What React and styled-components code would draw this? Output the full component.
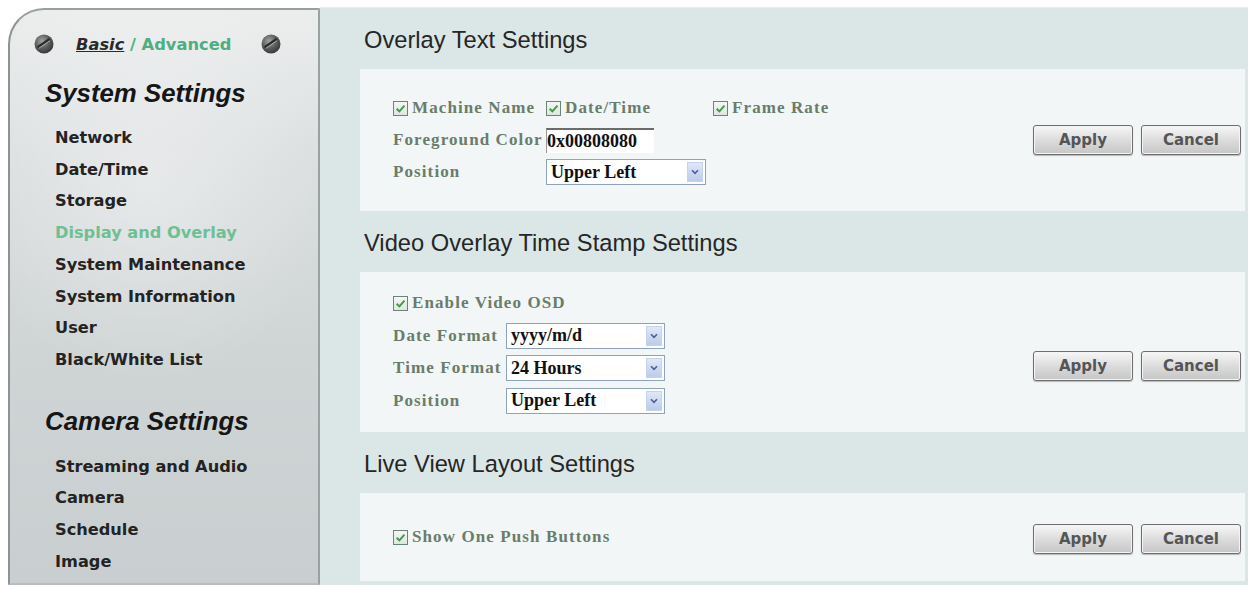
import React from 'react'
import styled, { createGlobalStyle } from 'styled-components'

const GlobalStyle = createGlobalStyle`
  html, body {
    margin: 0;
    padding: 0;
    background: #ffffff;
  }
  body {
    font-family: "Liberation Sans", Arial, sans-serif;
  }
`

const StyledPage = styled.div`
  display: flex;
  width: 1253px;
  height: 590px;
  box-sizing: border-box;
  padding: 7px 5px 5px 8px;
`

const StyledSidebar = styled.div`
  width: 312px;
  flex-shrink: 0;
  box-sizing: border-box;
  margin-top: 1px;
  border-top-left-radius: 36px;
  border-left: 2px solid #8e9293;
  border-top: 2px solid #9a9e9f;
  border-right: 2px solid #9aa1a2;
  border-bottom: 2px solid #b8bdbe;
  background:
    radial-gradient(ellipse 60% 35% at 45% 30%, rgba(255, 255, 255, 0.35), rgba(255, 255, 255, 0)),
    linear-gradient(180deg, #eceeee 0%, #dcdfe0 25%, #cfd4d5 60%, #c9cfd0 100%);
  font-family: "DejaVu Sans", Verdana, sans-serif;
`

const StyledModeRow = styled.div`
  display: flex;
  align-items: center;
  height: 24px;
  margin: 22px 0 0 23px;
  width: 249px;
  font-size: 16.3px;
  font-weight: bold;
  color: #4fae80;
`

const StyledModeText = styled.div`
  flex: 1;
  padding-left: 21px;
`

const StyledBasic = styled.span`
  color: #2a2a2a;
  font-style: italic;
  text-decoration: underline;
`

const StyledGroupTitle = styled.div`
  font-family: "Liberation Sans", Arial, sans-serif;
  font-style: italic;
  font-weight: bold;
  font-size: 25.8px;
  line-height: 34px;
  color: #161616;
  margin: ${props => props.top}px 0 0 35px;
`

const StyledNav = styled.div`
  margin: ${props => props.top}px 0 0 45px;
`

const StyledNavItem = styled.div`
  font-size: 16.2px;
  font-weight: bold;
  line-height: 31.7px;
  color: ${props => props.active ? '#6fbf94' : '#232323'};
`

const StyledMain = styled.div`
  flex: 1;
  display: flex;
  flex-direction: column;
  background: #dbe6e6;
  padding: 0 3px 3px 40px;
  border-top: 1px solid #e8eeee;
`

const StyledHeader = styled.div`
  height: 61px;
  display: flex;
  align-items: center;
  padding: 3px 0 0 4px;
  box-sizing: border-box;
  font-size: 23.7px;
  color: #262626;
`

const StyledPanel = styled.div`
  display: flex;
  align-items: center;
  height: ${props => props.h}px;
  background: #f2f6f6;
  padding: 0 4px 0 33px;
  box-sizing: border-box;
`

const StyledForm = styled.div`
  flex: 1;
  display: grid;
  grid-template-columns: ${props => props.cols};
  grid-auto-rows: ${props => props.pitch}px;
  align-items: center;
  font-family: "Liberation Serif", "Times New Roman", serif;
  font-weight: bold;
  font-size: 17px;
  letter-spacing: 1.1px;
  color: #6a7c6a;
`

const StyledCheckLabel = styled.label`
  display: flex;
  align-items: center;
  gap: 4px;
  white-space: nowrap;
  grid-column: ${props => props.span ? '1 / -1' : 'auto'};
`

const StyledBox = styled.span`
  width: 13px;
  height: 13px;
  border: 1px solid #6a8577;
  background: linear-gradient(180deg, #f4f6f4, #dfe6df);
  display: inline-flex;
  align-items: center;
  justify-content: center;
  flex-shrink: 0;
`

const StyledLabel = styled.span`
  white-space: nowrap;
`

const StyledTextInput = styled.div`
  width: 108px;
  height: 25px;
  box-sizing: border-box;
  background: #fff;
  border-top: 2px solid #6b6b6b;
  border-left: 1px solid #9a9a9a;
  display: flex;
  align-items: center;
  color: #111;
  letter-spacing: 0;
  font-size: 18px;
`

const StyledSelect = styled.div`
  width: ${props => props.w}px;
  height: 26px;
  box-sizing: border-box;
  background: #fff;
  border: 1px solid #8ea3c0;
  display: flex;
  align-items: center;
  justify-content: space-between;
  padding-left: 4px;
  color: #111;
  letter-spacing: 0;
  font-size: 18px;
`

const StyledArrow = styled.span`
  width: 16px;
  height: 20px;
  margin-right: 2px;
  background: linear-gradient(180deg, #dfe8f7, #bccbec);
  border: 1px solid #c5d2ec;
  box-sizing: border-box;
  display: flex;
  align-items: center;
  justify-content: center;
`

const StyledButtons = styled.div`
  display: flex;
  gap: 8px;
  padding-top: ${props => props.shift || 0}px;
`

const StyledButton = styled.button`
  width: 100px;
  height: 30px;
  border: 1px solid #6e6e6e;
  border-radius: 3px;
  background: linear-gradient(180deg, #f7f7f7 0%, #dcdcdc 50%, #c6c6c6 100%);
  box-shadow: inset 0 0 0 1px #f4f4f4, 0 1px 1px rgba(0, 0, 0, 0.25);
  font-family: "DejaVu Sans", Verdana, sans-serif;
  font-weight: bold;
  font-size: 15px;
  color: #555;
  padding: 0;
`

const Screw = () => (
  <svg width="22" height="22" viewBox="0 0 22 22">
    <defs>
      <radialGradient id="screwFill" cx="40%" cy="35%" r="70%">
        <stop offset="0%" stopColor="#a4a4a4" />
        <stop offset="55%" stopColor="#5c5c5c" />
        <stop offset="100%" stopColor="#333" />
      </radialGradient>
    </defs>
    <circle cx="11" cy="11" r="9.5" fill="url(#screwFill)" />
    <path d="M5.5 13.8 L16 6.6" stroke="#2a2a2a" strokeWidth="2.4" strokeLinecap="round" />
    <path d="M6.2 15 L16.6 7.9" stroke="#b8b8b8" strokeWidth="0.9" strokeLinecap="round" />
  </svg>
)

const Check = ({ label, span }) => (
  <StyledCheckLabel span={span}>
    <StyledBox>
      <svg width="11" height="11" viewBox="0 0 10 10">
        <path d="M1.5 5.2 L4 7.6 L8.6 2.4" fill="none" stroke="#3f9a4a" strokeWidth="1.8" />
      </svg>
    </StyledBox>
    {label}
  </StyledCheckLabel>
)

const Select = ({ value, w }) => (
  <StyledSelect w={w}>
    {value}
    <StyledArrow>
      <svg width="8" height="6" viewBox="0 0 8 6">
        <path d="M1 1.2 L4 4.4 L7 1.2" fill="none" stroke="#4a5f9a" strokeWidth="1.6" />
      </svg>
    </StyledArrow>
  </StyledSelect>
)

const Buttons = ({ shift }) => (
  <StyledButtons shift={shift}>
    <StyledButton>Apply</StyledButton>
    <StyledButton>Cancel</StyledButton>
  </StyledButtons>
)

const systemItems = ['Network', 'Date/Time', 'Storage', 'Display and Overlay', 'System Maintenance', 'System Information', 'User', 'Black/White List']
const cameraItems = ['Streaming and Audio', 'Camera', 'Schedule', 'Image']

export default function App() {
  return (
    <StyledPage>
      <GlobalStyle />
      <StyledSidebar>
        <StyledModeRow>
          <Screw />
          <StyledModeText><StyledBasic>Basic</StyledBasic> / Advanced</StyledModeText>
          <Screw />
        </StyledModeRow>
        <StyledGroupTitle top={20}>System Settings</StyledGroupTitle>
        <StyledNav top={12}>
          {systemItems.map(item => (
            <StyledNavItem key={item} active={item === 'Display and Overlay'}>{item}</StyledNavItem>
          ))}
        </StyledNav>
        <StyledGroupTitle top={28}>Camera Settings</StyledGroupTitle>
        <StyledNav top={13}>
          {cameraItems.map(item => <StyledNavItem key={item}>{item}</StyledNavItem>)}
        </StyledNav>
      </StyledSidebar>

      <StyledMain>
        <StyledHeader>Overlay Text Settings</StyledHeader>
        <StyledPanel h={142}>
          <StyledForm cols="153px 167px auto" pitch={32}>
            <Check label="Machine Name" />
            <Check label="Date/Time" />
            <Check label="Frame Rate" />
            <StyledLabel>Foreground Color</StyledLabel>
            <StyledTextInput>0x00808080</StyledTextInput>
            <span />
            <StyledLabel>Position</StyledLabel>
            <Select value="Upper Left" w={160} />
          </StyledForm>
          <Buttons />
        </StyledPanel>

        <StyledHeader>Video Overlay Time Stamp Settings</StyledHeader>
        <StyledPanel h={160}>
          <StyledForm cols="113px auto" pitch={32.5}>
            <Check label="Enable Video OSD" span />
            <StyledLabel>Date Format</StyledLabel>
            <Select value="yyyy/m/d" w={159} />
            <StyledLabel>Time Format</StyledLabel>
            <Select value="24 Hours" w={159} />
            <StyledLabel>Position</StyledLabel>
            <Select value="Upper Left" w={159} />
          </StyledForm>
          <Buttons shift={28} />
        </StyledPanel>

        <StyledHeader>Live View Layout Settings</StyledHeader>
        <StyledPanel h={88}>
          <StyledForm cols="auto" pitch={32}>
            <Check label="Show One Push Buttons" />
          </StyledForm>
          <Buttons shift={4} />
        </StyledPanel>
      </StyledMain>
    </StyledPage>
  )
}
